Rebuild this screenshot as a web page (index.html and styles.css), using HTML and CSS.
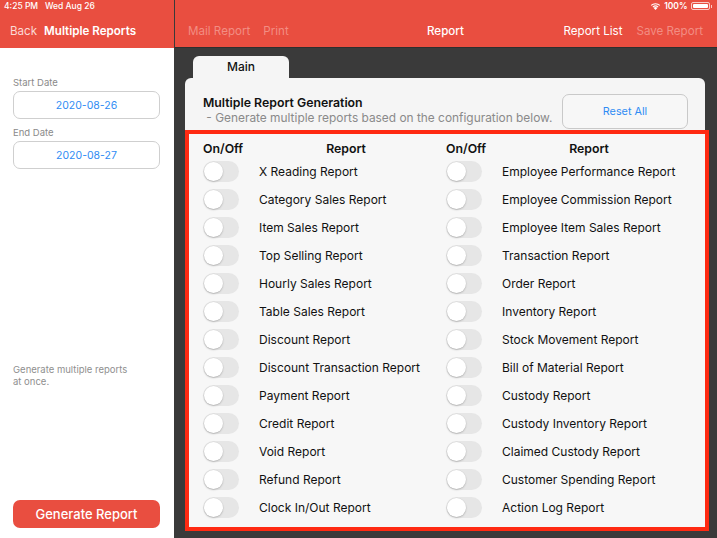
FILE: index.html
```html
<!DOCTYPE html>
<html>
<head>
<meta charset="utf-8">
<link rel="stylesheet" href="styles.css">
</head>
<body>
<div class="app">
  <div class="status">
    <span class="time">4:25 PM&nbsp;&nbsp;&nbsp;Wed Aug 26</span>
    <span class="stat-right">
      <svg class="wifi" width="11" height="8" viewBox="0 0 11 8"><path d="M5.5 8 L3.6 5.9 A2.8 2.8 0 0 1 7.4 5.9 Z" fill="#fff"/><path d="M2.5 4.8 A4.3 4.3 0 0 1 8.5 4.8 L7.8 5.5 A3.3 3.3 0 0 0 3.2 5.5 Z" fill="#fff"/><path d="M0.8 3.1 A6.7 6.7 0 0 1 10.2 3.1 L9.5 3.8 A5.7 5.7 0 0 0 1.5 3.8 Z" fill="#fff"/></svg>
      <span class="pct">100%</span>
      <span class="battery"><span class="battery-fill"></span></span><span class="battery-tip"></span>
    </span>
  </div>
  <aside class="sidebar">
    <div class="side-nav">
      <span class="back">Back</span>
      <span class="side-title">Multiple Reports</span>
    </div>
    <div class="side-body">
      <div class="field-label">Start Date</div>
      <div class="date-field">2020-08-26</div>
      <div class="field-label">End Date</div>
      <div class="date-field">2020-08-27</div>
      <div class="side-spacer"></div>
      <p class="side-note">Generate multiple reports<br>at once.</p>
      <button class="gen-btn">Generate Report</button>
    </div>
  </aside>
  <main class="main">
    <div class="main-nav">
      <div class="nav-left"><span class="faded">Mail Report</span><span class="faded">Print</span></div>
      <div class="nav-title">Report</div>
      <div class="nav-right"><span>Report List</span><span class="faded">Save Report</span></div>
    </div>
    <div class="content">
      <div class="tab">Main</div>
      <div class="card">
        <div class="card-head">
          <div>
            <div class="card-title">Multiple Report Generation</div>
            <div class="card-sub">&nbsp;- Generate multiple reports based on the configuration below.</div>
          </div>
          <button class="reset-btn">Reset All</button>
        </div>
        <div class="grid-box">
          <div class="grid">
            <div class="h onoff">On/Off</div><div class="h rep">Report</div>
            <div class="h onoff">On/Off</div><div class="h rep">Report</div>

            <div class="tg"><span class="knob"></span></div><div class="lbl">X Reading Report</div>
            <div class="tg"><span class="knob"></span></div><div class="lbl">Employee Performance Report</div>

            <div class="tg"><span class="knob"></span></div><div class="lbl">Category Sales Report</div>
            <div class="tg"><span class="knob"></span></div><div class="lbl">Employee Commission Report</div>

            <div class="tg"><span class="knob"></span></div><div class="lbl">Item Sales Report</div>
            <div class="tg"><span class="knob"></span></div><div class="lbl">Employee Item Sales Report</div>

            <div class="tg"><span class="knob"></span></div><div class="lbl">Top Selling Report</div>
            <div class="tg"><span class="knob"></span></div><div class="lbl">Transaction Report</div>

            <div class="tg"><span class="knob"></span></div><div class="lbl">Hourly Sales Report</div>
            <div class="tg"><span class="knob"></span></div><div class="lbl">Order Report</div>

            <div class="tg"><span class="knob"></span></div><div class="lbl">Table Sales Report</div>
            <div class="tg"><span class="knob"></span></div><div class="lbl">Inventory Report</div>

            <div class="tg"><span class="knob"></span></div><div class="lbl">Discount Report</div>
            <div class="tg"><span class="knob"></span></div><div class="lbl">Stock Movement Report</div>

            <div class="tg"><span class="knob"></span></div><div class="lbl">Discount Transaction Report</div>
            <div class="tg"><span class="knob"></span></div><div class="lbl">Bill of Material Report</div>

            <div class="tg"><span class="knob"></span></div><div class="lbl">Payment Report</div>
            <div class="tg"><span class="knob"></span></div><div class="lbl">Custody Report</div>

            <div class="tg"><span class="knob"></span></div><div class="lbl">Credit Report</div>
            <div class="tg"><span class="knob"></span></div><div class="lbl">Custody Inventory Report</div>

            <div class="tg"><span class="knob"></span></div><div class="lbl">Void Report</div>
            <div class="tg"><span class="knob"></span></div><div class="lbl">Claimed Custody Report</div>

            <div class="tg"><span class="knob"></span></div><div class="lbl">Refund Report</div>
            <div class="tg"><span class="knob"></span></div><div class="lbl">Customer Spending Report</div>

            <div class="tg"><span class="knob"></span></div><div class="lbl">Clock In/Out Report</div>
            <div class="tg"><span class="knob"></span></div><div class="lbl">Action Log Report</div>
          </div>
        </div>
      </div>
    </div>
  </main>
</div>
</body>
</html>
```

FILE: styles.css
```css
* { box-sizing: border-box; }
html, body { margin: 0; padding: 0; }
body {
  width: 717px;
  height: 538px;
  overflow: hidden;
  font-family: "Inter", "Liberation Sans", sans-serif;
  background: #3a3a3a;
}
.app {
  position: relative;
  display: flex;
  width: 717px;
  height: 538px;
}
.status {
  position: absolute;
  z-index: 5;
  left: 0; top: 0; right: 0;
  height: 12px;
  display: flex;
  justify-content: space-between;
  align-items: center;
  padding: 0 5px 0 4px;
  color: #fff;
  font-size: 8.5px;
  font-weight: 500;
}
.stat-right { display: flex; align-items: center; gap: 3px; }
.pct { font-weight: 600; }
.battery {
  width: 19px; height: 8px;
  border: 1px solid rgba(255,255,255,0.7);
  border-radius: 2px;
  padding: 1px;
  display: flex;
}
.battery-fill { flex: 1; background: #fff; border-radius: 1px; }
.battery-tip { width: 1.5px; height: 3px; background: rgba(255,255,255,0.7); margin-left: -2px; }

.sidebar {
  width: 175px;
  flex: none;
  display: flex;
  flex-direction: column;
  background: #fff;
  border-right: 1px solid #3a3a3a;
}
.side-nav {
  height: 48px;
  background: #e94e40;
  display: flex;
  align-items: center;
  padding: 14px 0 0 10px;
  gap: 7px;
  color: #fff;
  font-size: 11.6px;
}
.back { color: #fbd9d5; }
.side-title { font-weight: 600; }
.side-body {
  flex: 1;
  display: flex;
  flex-direction: column;
  padding: 29px 14px 10px 13px;
}
.field-label {
  font-size: 9.5px;
  color: #8a8a8a;
  margin-bottom: 3px;
}
.date-field {
  height: 28px;
  border: 1px solid #cfcfcf;
  border-radius: 7px;
  display: flex;
  align-items: center;
  justify-content: center;
  color: #2f8cf4;
  font-size: 10.5px;
  margin-bottom: 8px;
}
.side-spacer { flex: 1; }
.side-note {
  margin: 0 0 112px;
  font-size: 9.5px;
  line-height: 12px;
  color: #8f8f8f;
}
.gen-btn {
  height: 28px;
  border: none;
  border-radius: 7px;
  background: #e94e40;
  color: #fff;
  font-family: inherit;
  font-size: 13px;
  font-weight: 500;
}

.main {
  flex: 1;
  display: flex;
  flex-direction: column;
}
.main-nav {
  height: 48px;
  background: #e94e40;
  border-bottom: 1px solid #2e2e2e;
  display: flex;
  align-items: center;
  padding: 14px 0 0 13px;
  color: #fff;
  font-size: 11.6px;
  position: relative;
}
.nav-left { display: flex; gap: 13px; flex: 1; }
.faded { color: #f28d83; }
.nav-title { flex: none; width: 60px; text-align: center; font-weight: 500; }
.nav-right { display: flex; gap: 14px; flex: 1; justify-content: flex-end; padding-right: 14px; }

.content {
  flex: 1;
  padding: 8px 12px 7px 10px;
  display: flex;
  flex-direction: column;
}
.tab {
  width: 96px;
  height: 22px;
  margin-left: 8px;
  background: #f5f5f5;
  border-radius: 6px 6px 0 0;
  display: flex;
  align-items: center;
  justify-content: center;
  padding-bottom: 2px;
  font-size: 12px;
  font-weight: 500;
  color: #111;
}
.card {
  flex: 1;
  background: #f5f5f5;
  border-radius: 6px;
  display: flex;
  flex-direction: column;
}
.card-head {
  height: 52px;
  display: flex;
  justify-content: space-between;
  align-items: flex-start;
  padding: 16px 17px 0 18px;
}
.card-title {
  font-size: 12.3px;
  font-weight: 600;
  color: #111;
  line-height: 15px;
  margin-top: 1px;
}
.card-sub {
  font-size: 11.9px;
  color: #8a8a8a;
  line-height: 15px;
}
.reset-btn {
  width: 126px;
  height: 35px;
  background: #f7f7f7;
  border: 1px solid #c9c9c9;
  border-radius: 7px;
  color: #2f8cf4;
  font-family: inherit;
  font-size: 10.8px;
  margin-top: 0;
}
.grid-box {
  flex: 1;
  border: 4px solid #ff2a12;
  margin-right: -4px;
  background: #f7f7f7;
  padding: 5px 10px 0 14px;
}
.grid {
  display: grid;
  grid-template-columns: 56px 187px 56px 1fr;
  grid-template-rows: 18px;
  grid-auto-rows: 28.08px;
  align-items: center;
  font-size: 12px;
  color: #111;
}
.h { font-weight: 600; font-size: 12.3px; }
.rep { width: 174px; text-align: center; }
.tg {
  width: 36px;
  height: 21px;
  border-radius: 11px;
  background: #e6e6e6;
  position: relative;
}
.knob {
  position: absolute;
  left: 1px; top: 1px;
  width: 19px; height: 19px;
  border-radius: 50%;
  background: #fff;
  box-shadow: 0 1px 2px rgba(0,0,0,0.2), 0 0 0 0.5px rgba(0,0,0,0.05);
}
.lbl { white-space: nowrap; }
```
